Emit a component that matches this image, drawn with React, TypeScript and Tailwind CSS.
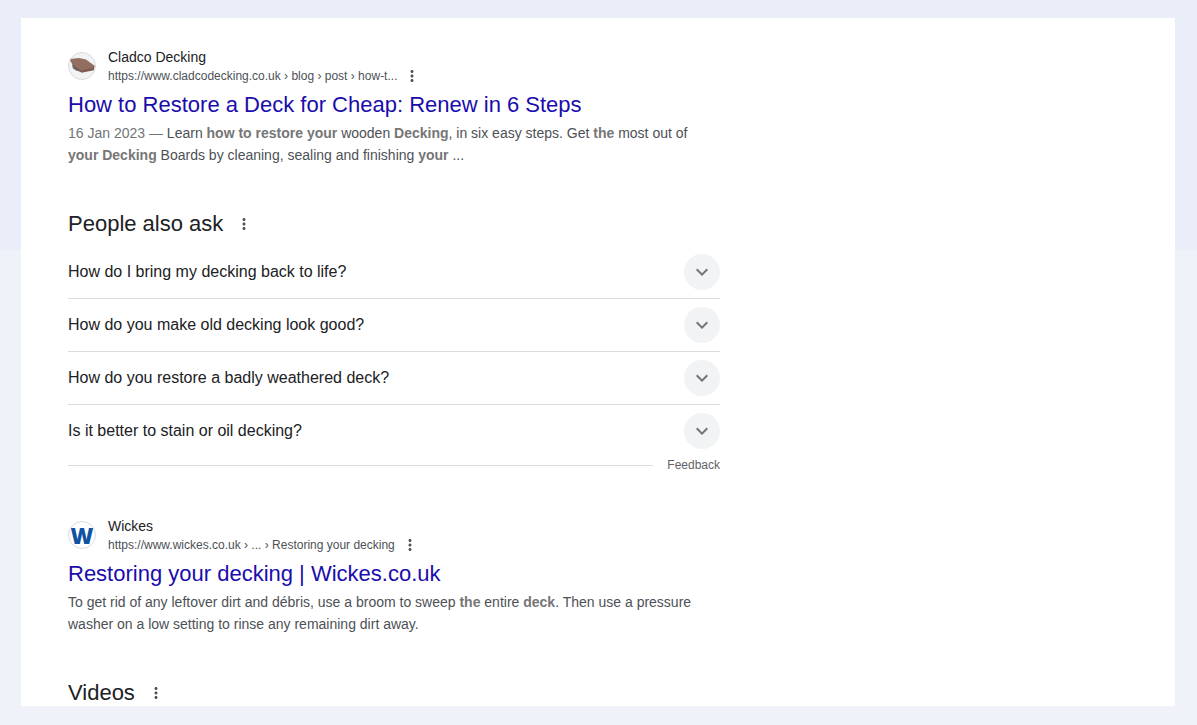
import type { ReactNode } from "react";

const QUESTIONS = [
  "How do I bring my decking back to life?",
  "How do you make old decking look good?",
  "How do you restore a badly weathered deck?",
  "Is it better to stain or oil decking?",
];

function MoreButton({ label }: { label: string }) {
  return (
    <button type="button" aria-label={label} className="shrink-0 text-[#4d5156]">
      <svg viewBox="0 0 24 24" className="block size-[18px]" fill="currentColor">
        <path d="M12 8c1.1 0 2-.9 2-2s-.9-2-2-2-2 .9-2 2 .9 2 2 2zm0 2c-1.1 0-2 .9-2 2s.9 2 2 2 2-.9 2-2-.9-2-2-2zm0 6c-1.1 0-2 .9-2 2s.9 2 2 2 2-.9 2-2-.9-2-2-2z" />
      </svg>
    </button>
  );
}

function DeckingIcon() {
  return (
    <svg viewBox="1 1 26 26" className="size-full" aria-hidden="true">
      <path d="M4 12.5 L5 16.5 L8 18.5 L13 20 L9 14 Z" fill="#6b6563" />
      <path d="M1.5 7 L4.5 12.5 L13.5 20.8 L25.8 18.3 L26.6 14 Z" fill="#7d5c4f" />
      <path d="M1.5 7 L11 6 L18 7.5 L26.6 13.8 L25 15.5 L13.5 18.6 L5 12.5 Z" fill="#957060" />
      <path d="M5 7.5 L16 17 M9 7 L20 16 M13 7 L24 15" stroke="#896656" strokeWidth="0.5" />
    </svg>
  );
}

function WickesIcon() {
  return (
    <span
      aria-hidden="true"
      className="flex size-full items-center justify-center font-['Open_Sans',sans-serif] text-[22px] leading-none font-extrabold text-[#0f53a2]"
    >
      W
    </span>
  );
}

interface ResultProps {
  site: string;
  url: string;
  title: string;
  icon: ReactNode;
  iconClass: string;
  children: ReactNode;
}

function Result({ site, url, title, icon, iconClass, children }: ResultProps) {
  return (
    <article>
      <div className="flex items-center gap-3">
        <div className={`size-7 shrink-0 overflow-hidden rounded-full border border-[#dadce0] ${iconClass}`}>
          {icon}
        </div>
        <div className="min-w-0">
          <div className="text-sm text-[#202124]">{site}</div>
          <div className="flex items-center gap-1.5">
            <cite className="truncate text-xs leading-[18px] text-[#4d5156] not-italic">{url}</cite>
            <MoreButton label="About this result" />
          </div>
        </div>
      </div>
      <h3 className="mt-1.5 text-[22px] leading-7 text-[#1a0dab]">
        <a href="#" className="hover:underline">
          {title}
        </a>
      </h3>
      <p className="mt-[3px] text-sm leading-[22px] text-[#4d5156]">{children}</p>
    </article>
  );
}

function Bold({ children }: { children: ReactNode }) {
  return <b className="font-bold text-[#767676]">{children}</b>;
}

function SectionHeading({ children }: { children: string }) {
  return (
    <div className="flex items-center gap-3">
      <h2 className="text-[22px] leading-[26px] text-[#202124]">{children}</h2>
      <MoreButton label="About this section" />
    </div>
  );
}

function PeopleAlsoAsk() {
  return (
    <section>
      <SectionHeading>People also ask</SectionHeading>
      <ul className="mt-[9px] divide-y divide-[#dadce0]">
        {QUESTIONS.map((question) => (
          <li key={question}>
            <button
              type="button"
              className="flex w-full items-center justify-between py-2 text-left text-base text-[#202124]"
            >
              {question}
              <span className="flex size-9 shrink-0 items-center justify-center rounded-full bg-[#f1f3f4] text-[#70757a]">
                <svg viewBox="0 0 24 24" className="size-6" fill="currentColor">
                  <path d="M7.41 8.59 12 13.17l4.59-4.58L18 10l-6 6-6-6z" />
                </svg>
              </span>
            </button>
          </li>
        ))}
      </ul>
      <div className="flex items-center gap-[14px]">
        <div className="h-px flex-1 bg-[#dadce0]" />
        <a href="#" className="text-xs text-[#5f6368]">
          Feedback
        </a>
      </div>
    </section>
  );
}

export default function App() {
  return (
    <div className="min-h-screen bg-[linear-gradient(#e9eef8_250px,#eff3f9_250px)] py-[18px] pr-[22px] pl-[21px] font-['Liberation_Sans',Arial,sans-serif]">
      <main className="bg-white px-[47px] pt-[29px]">
        <div className="max-w-[652px]">
          <Result
            site="Cladco Decking"
            url="https://www.cladcodecking.co.uk › blog › post › how-t..."
            title="How to Restore a Deck for Cheap: Renew in 6 Steps"
            icon={<DeckingIcon />}
            iconClass="bg-[#f1f3f4]"
          >
            <span className="text-[#70757a]">16 Jan 2023 — </span>
            Learn <Bold>how to restore your</Bold> wooden <Bold>Decking</Bold>, in six easy steps. Get{" "}
            <Bold>the</Bold> most out of <Bold>your Decking</Bold> Boards by cleaning, sealing and
            finishing <Bold>your</Bold> ...
          </Result>

          <div className="mt-[45px] mb-[43px]">
            <PeopleAlsoAsk />
          </div>

          <Result
            site="Wickes"
            url="https://www.wickes.co.uk › ... › Restoring your decking"
            title="Restoring your decking | Wickes.co.uk"
            icon={<WickesIcon />}
            iconClass="bg-white"
          >
            To get rid of any leftover dirt and débris, use a broom to sweep <Bold>the</Bold> entire{" "}
            <Bold>deck</Bold>. Then use a pressure washer on a low setting to rinse any remaining dirt
            away.
          </Result>

          <div className="mt-[45px]">
            <SectionHeading>Videos</SectionHeading>
          </div>
        </div>
      </main>
    </div>
  );
}
